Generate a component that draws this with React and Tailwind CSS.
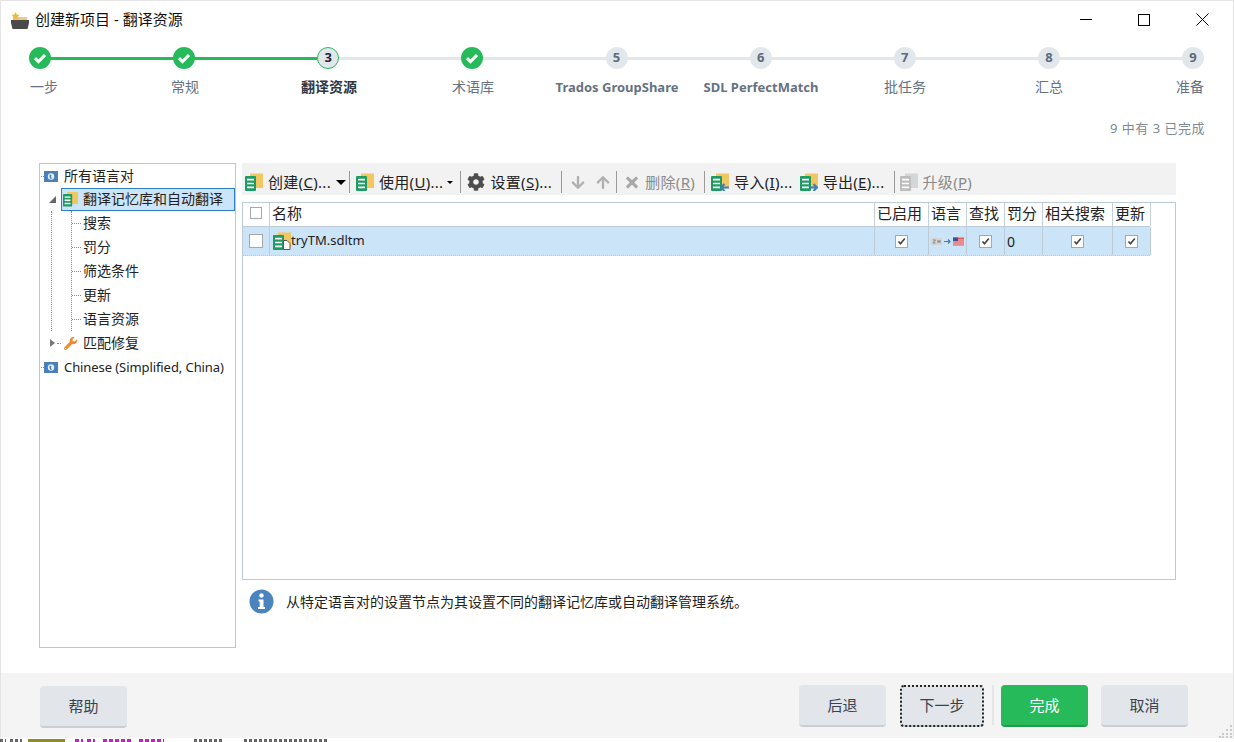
import React from 'react';
import { FaCog, FaArrowDown, FaArrowUp, FaTimes, FaWrench } from 'react-icons/fa';

const FONT = { fontFamily: '"Noto Sans", "Noto Sans CJK SC", sans-serif' };

function Tm({ arrow, doc, gray, small }) {
  const g = gray ? '#bdbdbd' : '#1f9a63';
  const y = gray ? '#d6d6d6' : '#f2c661';
  const w = small ? 15 : 18;
  return (
    <svg width={w} height={small ? 16 : 18} viewBox="0 0 18 18" className="shrink-0">
      <path d="M5 .5h13v14.5H5z" fill={y} />
      <rect x="0" y="3" width="11" height="15" rx="1" fill={g} />
      <path d="M2 6.7h7M2 10.5h7M2 14.3h7" stroke="#fff" strokeWidth="1.7" />
      {arrow === 'in' && <path d="M18 14.5H10M13.5 11l-3.5 3.5 3.5 3.5" stroke="#3f7fb5" strokeWidth="2" fill="none" />}
      {arrow === 'out' && <path d="M9.5 14.5H17M13.5 11l3.5 3.5-3.5 3.5" stroke="#3f7fb5" strokeWidth="2" fill="none" />}
      {doc && <path d="M10.5 8.5h3.5l3 3v6h-6.5z" fill="#fff" stroke="#555" strokeWidth="1" />}
    </svg>
  );
}

function Globe() {
  return (
    <svg width="14" height="11" viewBox="0 0 14 11" className="shrink-0">
      <rect width="14" height="11" fill="#4a7fb8" />
      <circle cx="7" cy="5.5" r="3.2" fill="#e8f0f8" />
      <path d="M5.5 3.5l2 .5-.5 2 1 1.5-1.5.5-1-2z" fill="#4a7fb8" />
    </svg>
  );
}

function Check() {
  return (
    <svg width="22" height="22" viewBox="0 0 22 22" className="shrink-0">
      <circle cx="11" cy="11" r="11" fill="#27ba5b" />
      <path d="M6 11.2l3.5 3.4L16 8" stroke="#fff" strokeWidth="3" fill="none" />
    </svg>
  );
}

function Step({ n, state }) {
  if (state === 'done') return <Check />;
  if (state === 'cur')
    return (
      <div className="flex h-[22px] w-[22px] shrink-0 items-center justify-center rounded-full border border-[#27ba5b] bg-[#e2e7ec] text-[13px] font-bold text-[#1f2937]">
        {n}
      </div>
    );
  return (
    <div className="flex h-[22px] w-[22px] shrink-0 items-center justify-center rounded-full bg-[#e2e7ec] text-[13px] font-bold text-[#5d6b7a]">
      {n}
    </div>
  );
}

function Line({ on }) {
  return <div className={`h-[3px] flex-1 ${on ? 'bg-[#27ba5b]' : 'bg-[#e2e7ec]'}`} />;
}

function Sep() {
  return <div className="mx-[3px] h-[22px] w-px bg-[#9a9a9a]" />;
}

function Tool({ icon, label, u, rest, disabled, className }) {
  return (
    <div className={`flex items-center gap-[5px] whitespace-nowrap text-[15px] leading-[20px] tracking-[0.3px] ${disabled ? 'text-[#8a8a8a]' : 'text-[#222]'} ${className || ''}`}>
      {icon}
      <span>
        {label}(<span className="underline">{u}</span>){rest}
      </span>
    </div>
  );
}

function Box({ checked, big }) {
  return (
    <div className={`flex items-center justify-center border border-[#a8a8a8] bg-white ${big ? 'h-[14px] w-[14px]' : checked ? 'h-[13px] w-[13px]' : 'h-[12px] w-[12px]'}`}>
      {checked && (
        <svg width="9" height="9" viewBox="0 0 9 9">
          <path d="M1.5 4.5l2 2.2L7.8 1.5" stroke="#444" strokeWidth="1.7" fill="none" />
        </svg>
      )}
    </div>
  );
}

function Head({ children, center }) {
  return (
    <div className={`flex items-center whitespace-nowrap border-r border-[#c3d1da] pb-[3px] text-[15px] leading-[20px] text-[#222] ${center ? 'justify-center' : 'justify-start pl-[2px]'}`}>
      {children}
    </div>
  );
}

function Cell({ children, className }) {
  return <div className={`flex items-center border-r border-[#bccbd6] ${className || 'justify-center'}`}>{children}</div>;
}

function Leaf({ children }) {
  return (
    <div className="flex h-6 items-center">
      <div className="mr-[2px] w-[9px] border-t border-dotted border-[#8a8a8a]" />
      <span>{children}</span>
    </div>
  );
}

function FootBtn({ children, tone, className }) {
  const look =
    tone === 'green'
      ? 'border-[#1d9c4c] bg-[#27ba5b] text-white'
      : 'border-[#c8ced4] bg-[#e2e6ea] text-[#39424e]';
  return (
    <div className={`flex h-[42px] items-center justify-center rounded-[4px] border-b-[2px] text-[15px] ${look} ${className}`}>
      {children}
    </div>
  );
}

const COLS = 'grid w-[907px] grid-cols-[27px_605px_54px_38px_38px_38px_70px_38px]';

const DARK = 'bg-[repeating-linear-gradient(90deg,#666_0_3px,transparent_3px_5px)]';
const PINK = 'bg-[repeating-linear-gradient(90deg,#c41fc4_0_4px,transparent_4px_6px)]';

const STRIP = [
  ['w-[6px]', DARK],
  ['w-[4px]', ''],
  ['w-[12px]', DARK],
  ['w-[6px]', ''],
  ['w-[37px]', 'bg-[#8c8c20]'],
  ['w-[10px]', ''],
  ['w-[8px]', PINK],
  ['w-[4px]', ''],
  ['w-[8px]', PINK],
  ['w-[8px]', ''],
  ['w-[30px]', PINK],
  ['w-[6px]', ''],
  ['w-[25px]', PINK],
  ['w-[30px]', ''],
  ['w-[30px]', DARK],
  ['w-[20px]', ''],
  ['w-[85px]', DARK],
];

export default function App() {
  return (
    <div style={FONT} className="flex h-[742px] w-[1234px] flex-col overflow-hidden bg-[#f0f0f0]">
      <div className="flex h-[739px] shrink-0 flex-col border-x border-t border-[#e4e4e4] bg-white">
        <div className="flex h-[37px] shrink-0 items-center pl-[9px] pr-[2px]">
          <svg width="20" height="18" viewBox="0 0 20 18" className="shrink-0">
            <path d="M3 6h14v4H3z" fill="#e9c98a" />
            <path d="M5.5 1l1.3 2.6 2.7.4-2 2 .5 2.7-2.5-1.3L3 8.7l.5-2.7-2-2 2.7-.4z" fill="#f0b93a" />
            <path d="M1 9h18v3l-1.5 6h-15L1 12z" fill="#4a4a4a" />
          </svg>
          <span className="ml-[5px] text-[15px] text-[#111]">创建新项目 - 翻译资源</span>
          <div className="ml-auto flex items-center">
            <div className="flex h-[37px] w-[59px] items-center justify-center">
              <div className="h-px w-3 bg-black" />
            </div>
            <div className="flex h-[37px] w-[58px] items-center justify-center">
              <div className="h-3 w-3 border border-black" />
            </div>
            <div className="flex h-[37px] w-[58px] items-center justify-center">
              <svg width="13" height="13" viewBox="0 0 13 13">
                <path d="M.5.5l12 12M12.5.5l-12 12" stroke="#000" strokeWidth="1" />
              </svg>
            </div>
          </div>
        </div>

        <div className="mt-[9px] flex shrink-0 items-center pl-[28px] pr-[29px]">
          <Step state="done" />
          <Line on />
          <Step state="done" />
          <Line on />
          <Step n="3" state="cur" />
          <Line />
          <Step state="done" />
          <Line />
          <Step n="5" />
          <Line />
          <Step n="6" />
          <Line />
          <Step n="7" />
          <Line />
          <Step n="8" />
          <Line />
          <Step n="9" />
        </div>

        <div className="mt-[9px] grid shrink-0 grid-cols-[84px_repeat(7,144px)_83px] pl-[28px] text-[14px] leading-[18px] text-[#66727f]">
          <div className="pl-px">一步</div>
          <div className="text-center">常规</div>
          <div className="text-center font-bold text-[#2d3642]">翻译资源</div>
          <div className="text-center">术语库</div>
          <div className="text-center text-[13px] font-bold">Trados GroupShare</div>
          <div className="text-center text-[13px] font-bold">SDL PerfectMatch</div>
          <div className="text-center">批任务</div>
          <div className="text-center">汇总</div>
          <div className="text-right">准备</div>
        </div>

        <div className="mt-[23px] shrink-0 pr-[28px] text-right text-[13px] leading-[18px] tracking-[0.5px] text-[#808a94]">9 中有 3 已完成</div>

        <div className="mt-[26px] flex h-[485px] shrink-0 pl-[38px]">
          <div className="w-[197px] shrink-0 border border-[#b9c9d4] pl-[4px] pt-[1px] text-[14px] leading-[20px] text-[#222]">
            <div className="flex h-[22px] items-center">
              <div className="-ml-[3px] w-[3px] border-t border-dotted border-[#8a8a8a]" />
              <Globe />
              <span className="ml-[6px]">所有语言对</span>
            </div>
            <div className="flex h-6 items-center">
              <span className="ml-[5px] mr-[5px] h-0 w-0 border-b-[7px] border-l-[7px] border-b-[#666] border-l-transparent" />
              <div className="flex h-[23px] flex-1 items-center border border-[#2d7fc1] bg-[#cce4f7] pl-[1px]">
                <Tm small />
                <span className="ml-[5px]">翻译记忆库和自动翻译</span>
              </div>
            </div>
            <div className="ml-[7px] border-l border-dotted border-[#8a8a8a]">
              <div className="ml-[19px] border-l border-dotted border-[#8a8a8a]">
                <Leaf>搜索</Leaf>
                <Leaf>罚分</Leaf>
                <Leaf>筛选条件</Leaf>
                <Leaf>更新</Leaf>
                <Leaf>语言资源</Leaf>
              </div>
            </div>
            <div className="flex h-6 items-center">
              <span className="ml-[6px] h-0 w-0 border-y-[4px] border-l-[5px] border-y-transparent border-l-[#777]" />
              <span className="ml-[2px] w-[4px] border-t border-dotted border-[#8a8a8a]" />
              <FaWrench className="ml-[3px] h-[13px] w-[13px] text-[#ef8a2e]" />
              <span className="ml-[6px]">匹配修复</span>
            </div>
            <div className="flex h-6 items-center">
              <div className="-ml-[3px] w-[3px] border-t border-dotted border-[#8a8a8a]" />
              <Globe />
              <span className="ml-[6px] text-[13px] tracking-[-0.08px]">Chinese (Simplified, China)</span>
            </div>
          </div>

          <div className="ml-[6px] flex w-[934px] shrink-0 flex-col">
            <div className="flex h-[32px] shrink-0 items-center bg-[#f2f2f2] pl-[3px] pt-[6px]">
              <Tool icon={<Tm />} label="创建" u="C" rest="..." />
              <span className="ml-[5px] h-0 w-0 border-x-[5px] border-t-[5px] border-x-transparent border-t-black" />
              <Sep />
              <Tool icon={<Tm />} label="使用" u="U" rest="..." className="ml-[3px]" />
              <span className="ml-[4px] h-0 w-0 border-x-[3px] border-t-[3px] border-x-transparent border-t-black" />
              <span className="ml-[4px]"><Sep /></span>
              <Tool icon={<FaCog className="h-[18px] w-[18px] text-[#4d4d4d]" />} label="设置" u="S" rest="..." className="ml-[3px]" />
              <span className="ml-[6px]"><Sep /></span>
              <FaArrowDown className="ml-[6px] h-[15px] w-[14px] text-[#b0b0b0]" />
              <FaArrowUp className="ml-[11px] h-[15px] w-[14px] text-[#b0b0b0]" />
              <span className="ml-[3px]"><Sep /></span>
              <FaTimes className="ml-[4px] h-[17px] w-[16px] text-[#a8a8a8]" />
              <Tool label="删除" u="R" disabled className="ml-[5px]" />
              <span className="ml-[6px]"><Sep /></span>
              <Tool icon={<Tm arrow="in" />} label="导入" u="I" rest="..." className="ml-[3px]" />
              <Tool icon={<Tm arrow="out" />} label="导出" u="E" rest="..." className="ml-[7px]" />
              <span className="ml-[6px]"><Sep /></span>
              <Tool icon={<Tm gray />} label="升级" u="P" disabled className="ml-[2px]" />
            </div>

            <div className="mt-[7px] h-[378px] shrink-0 border border-[#bccbd6]">
              <div className={`${COLS} h-[24px] border-b border-[#bccbd6]`}>
                <Head center><Box /></Head>
                <Head>名称</Head>
                <Head>已启用</Head>
                <Head>语言</Head>
                <Head>查找</Head>
                <Head>罚分</Head>
                <Head>相关搜索</Head>
                <Head>更新</Head>
              </div>
              <div className={`${COLS} h-[29px] border-b border-dotted border-[#bccbd6] bg-[#cce4f7]`}>
                <Cell><Box big /></Cell>
                <Cell className="justify-start pl-[3px]">
                  <Tm doc />
                  <span className="text-[13px] text-[#222]">tryTM.sdltm</span>
                </Cell>
                <Cell><Box checked /></Cell>
                <Cell className="justify-center">
                  <svg width="34" height="9" viewBox="0 0 34 9">
                    <rect x="0" y="1" width="11" height="7" fill="#d4d4d4" />
                    <path d="M2 3h2.5L2 6h2.5M7 3v3M9 3v3M7 4.5h2" stroke="#888" strokeWidth="1" fill="none" />
                    <path d="M13 4.5h6M17 2.5l2 2-2 2" stroke="#3f7fb5" strokeWidth="1.2" fill="none" />
                    <rect x="22" y="0.5" width="11" height="8" fill="#e5585a" />
                    <path d="M22 3h11M22 5h11M22 7h11" stroke="#f6d7d7" strokeWidth="0.8" />
                    <rect x="22" y="0.5" width="5" height="3.5" fill="#3c4f9c" />
                  </svg>
                </Cell>
                <Cell><Box checked /></Cell>
                <Cell className="justify-start pl-[2px] text-[14px] text-[#222]">0</Cell>
                <Cell><Box checked /></Cell>
                <Cell><Box checked /></Cell>
              </div>
            </div>

            <div className="mt-[9px] flex items-center pl-[7px]">
              <svg width="25" height="25" viewBox="0 0 25 25" className="shrink-0">
                <circle cx="12.5" cy="12.5" r="12" fill="#4b84bd" />
                <circle cx="12.5" cy="6.5" r="2.2" fill="#fff" />
                <path d="M9.5 10.5h5V18h1.5v2H9v-2h1.7v-5.5H9.5z" fill="#fff" />
              </svg>
              <span className="ml-[12px] text-[14px] leading-[20px] text-[#222]">从特定语言对的设置节点为其设置不同的翻译记忆库或自动翻译管理系统。</span>
            </div>
          </div>
        </div>

        <div className="relative mt-[25px] flex h-[65px] shrink-0 items-start bg-[#f4f4f4] pl-[39px] pr-[45px] pt-[12px]">
          <FootBtn className="mt-px w-[87px]">帮助</FootBtn>
          <FootBtn className="ml-auto w-[87px]">后退</FootBtn>
          <FootBtn className="ml-[14px] w-[84px] outline-dotted outline-2 -outline-offset-2 outline-[#222]">下一步</FootBtn>
          <div className="ml-[8px] h-[40px] w-[2px] bg-[#e2e6ea]" />
          <FootBtn tone="green" className="ml-[7px] w-[87px]">完成</FootBtn>
          <FootBtn className="ml-[13px] w-[87px]">取消</FootBtn>
          <svg width="14" height="14" viewBox="0 0 14 14" className="absolute bottom-0 right-0">
            <g fill="#c6cbd0">
              <rect x="11" y="1" width="2" height="2" />
              <rect x="7" y="5" width="2" height="2" />
              <rect x="11" y="5" width="2" height="2" />
              <rect x="3" y="9" width="2" height="2" />
              <rect x="7" y="9" width="2" height="2" />
              <rect x="11" y="9" width="2" height="2" />
              <rect x="0" y="12" width="2" height="2" />
              <rect x="3" y="12" width="2" height="2" />
              <rect x="7" y="12" width="2" height="2" />
              <rect x="11" y="12" width="2" height="2" />
            </g>
          </svg>
        </div>
      </div>
      <div className="flex h-[3px] shrink-0 bg-white">
        {STRIP.map(([w, c], i) => (
          <div key={i} className={`${w} ${c}`} />
        ))}
      </div>
    </div>
  );
}
